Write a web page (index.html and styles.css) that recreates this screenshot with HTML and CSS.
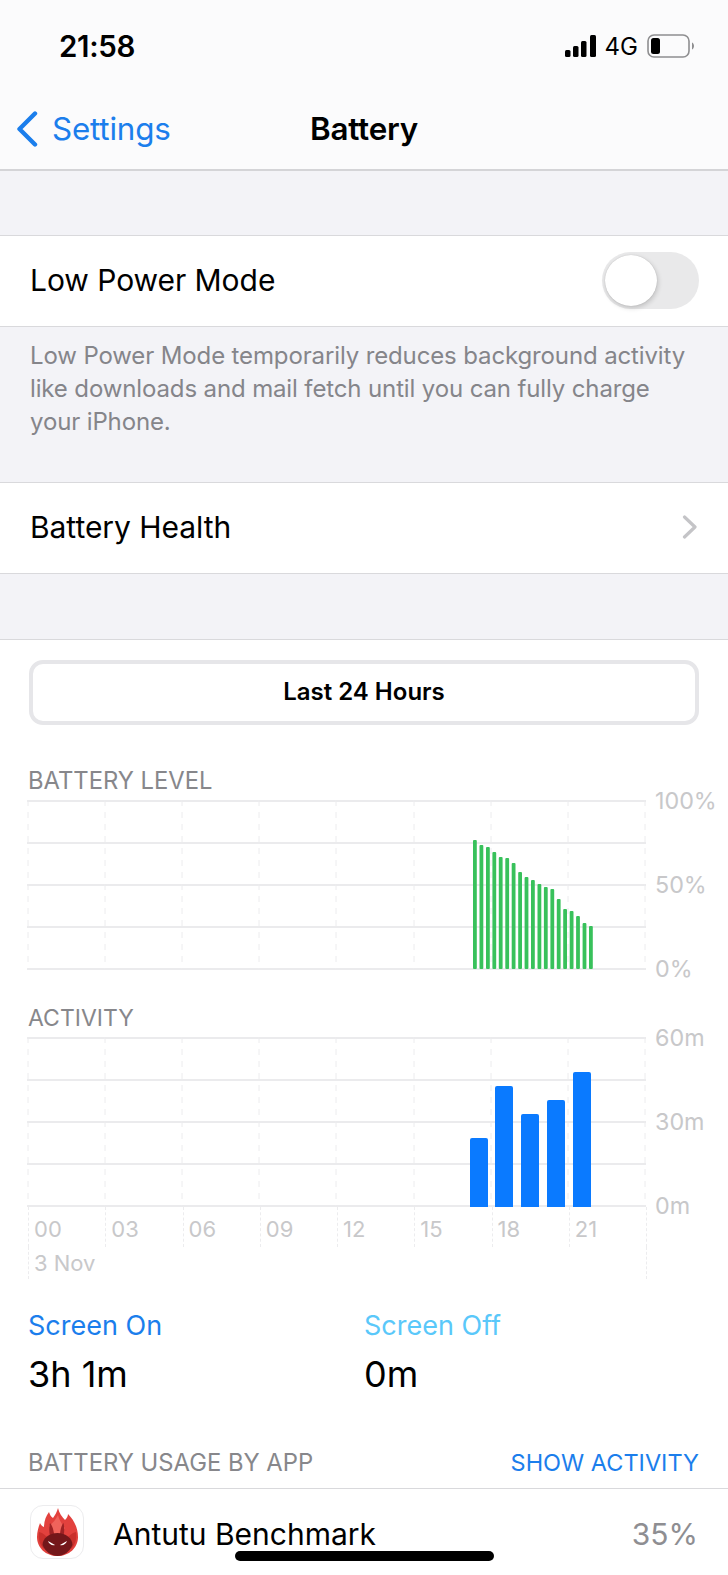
FILE: index.html
```html
<!DOCTYPE html>
<html lang="en">
<head>
<meta charset="utf-8">
<title>Battery</title>
<link rel="stylesheet" href="styles.css">
</head>
<body>
<div class="screen">
  <header class="top">
    <div class="status">
      <span class="time">21:58</span>
      <div class="indicators">
        <svg class="signal" width="32" height="22" viewBox="0 0 32 22"><rect x="0" y="15" width="5.5" height="7" rx="1.5"/><rect x="8" y="11" width="5.5" height="11" rx="1.5"/><rect x="16" y="6" width="5.5" height="16" rx="1.5"/><rect x="25" y="0" width="6" height="22" rx="1.5"/></svg>
        <span class="net">4G</span>
        <svg class="batt" width="47" height="24" viewBox="0 0 47 24"><rect x="1" y="1" width="41" height="22" rx="6" fill="none" stroke="#8e8e90" stroke-width="1.6"/><rect x="4" y="4" width="9" height="16" rx="2.5" fill="#000"/><path d="M45 8.5c1.4.6 2 2 2 3.500s-.6 2.900-2 3.500z" fill="#8e8e90"/></svg>
      </div>
    </div>
    <nav class="nav">
      <a class="back">
        <svg width="22" height="36" viewBox="0 0 22 36"><path d="M19 2.500 3.500 18 19 33.500" fill="none" stroke="#1b7eec" stroke-width="4.400" stroke-linecap="round" stroke-linejoin="round"/></svg>
        <span>Settings</span>
      </a>
      <h1 class="title">Battery</h1>
    </nav>
  </header>

  <section class="cell cell-first">
    <span class="cell-label">Low Power Mode</span>
    <span class="toggle"><span class="knob"></span></span>
  </section>
  <p class="note">Low Power Mode temporarily reduces background activity<br>like downloads and mail fetch until you can fully charge<br>your iPhone.</p>
  <section class="cell">
    <span class="cell-label">Battery Health</span>
    <svg class="chev" width="16" height="24" viewBox="0 0 16 24"><path d="M2.500 2 13 12 2.500 22" fill="none" stroke="#c4c4c7" stroke-width="3.200" stroke-linecap="round" stroke-linejoin="round"/></svg>
  </section>

  <main class="panel">
    <div class="segment">Last 24 Hours</div>

    <h2 class="chart-title first">BATTERY LEVEL</h2>
    <div class="chart">
      <svg class="plot" width="619" height="170" viewBox="0 0 619 170">
        <g class="hlines"><path d="M0 1H619M0 43H619M0 85H619M0 127H619M0 169H619"/></g>
        <g class="vlines"><path d="M1 0V169M78 0V169M155 0V169M232 0V169M309 0V169M387 0V169M464 0V169M541 0V169M618 0V169"/></g>
        <g class="green">
          <rect x="446" y="40" width="3.800" height="129" rx="1"/><rect x="452.500" y="45" width="3.800" height="124" rx="1"/><rect x="459" y="47" width="3.800" height="122" rx="1"/><rect x="465.400" y="52" width="3.800" height="117" rx="1"/><rect x="471.800" y="57" width="3.800" height="112" rx="1"/><rect x="478.300" y="58" width="3.800" height="111" rx="1"/><rect x="484.700" y="63" width="3.800" height="106" rx="1"/><rect x="491.200" y="72" width="3.800" height="97" rx="1"/><rect x="497.600" y="77" width="3.800" height="92" rx="1"/><rect x="504" y="80" width="3.800" height="89" rx="1"/><rect x="510.500" y="84" width="3.800" height="85" rx="1"/><rect x="516.900" y="87" width="3.800" height="82" rx="1"/><rect x="523.400" y="89" width="3.800" height="80" rx="1"/><rect x="529.800" y="99" width="3.800" height="70" rx="1"/><rect x="536.200" y="109" width="3.800" height="60" rx="1"/><rect x="542.700" y="111" width="3.800" height="58" rx="1"/><rect x="549.100" y="116" width="3.800" height="53" rx="1"/><rect x="555.600" y="123" width="3.800" height="46" rx="1"/><rect x="562" y="126" width="3.800" height="43" rx="1"/>
        </g>
      </svg>
      <div class="yaxis"><span>100%</span><span>50%</span><span>0%</span></div>
    </div>

    <h2 class="chart-title second">ACTIVITY</h2>
    <div class="chart">
      <svg class="plot" width="619" height="170" viewBox="0 0 619 170">
        <g class="hlines"><path d="M0 1H619M0 43H619M0 85H619M0 127H619M0 169H619"/></g>
        <g class="vlines"><path d="M1 0V169M78 0V169M155 0V169M232 0V169M309 0V169M387 0V169M464 0V169M541 0V169M618 0V169"/></g>
        <g class="blue">
          <path d="M443 103a2 2 0 0 1 2-2h14a2 2 0 0 1 2 2v67h-18z"/><path d="M468 51a2 2 0 0 1 2-2h14a2 2 0 0 1 2 2v119h-18z"/><path d="M494 79a2 2 0 0 1 2-2h14a2 2 0 0 1 2 2v91h-18z"/><path d="M520 65a2 2 0 0 1 2-2h14a2 2 0 0 1 2 2v105h-18z"/><path d="M546 37a2 2 0 0 1 2-2h14a2 2 0 0 1 2 2v133h-18z"/>
        </g>
      </svg>
      <div class="yaxis"><span>60m</span><span>30m</span><span>0m</span></div>
    </div>
    <div class="xaxis">
      <span>00</span><span>03</span><span>06</span><span>09</span><span>12</span><span>15</span><span>18</span><span>21</span>
    </div>
    <div class="date">3 Nov</div>

    <div class="stats">
      <div class="stat">
        <div class="stat-on">Screen On</div>
        <div class="stat-value">3h 1m</div>
      </div>
      <div class="stat">
        <div class="stat-off">Screen Off</div>
        <div class="stat-value">0m</div>
      </div>
    </div>

    <div class="usage-head">
      <span>BATTERY USAGE BY APP</span>
      <a class="show">SHOW ACTIVITY</a>
    </div>
    <div class="app">
      <span class="app-icon">
        <svg width="54" height="54" viewBox="0 0 54 54">
          <path d="M28 3C29 8 32 12 35 15 37 13 38 11 38 9 44 15 48 23 48 32 48 43 39 51 27.500 51 16 51 7 43 7 32 7 26 9 21 10 18 11 20 12 21 14 22 14 16 16 11 19 7 20 10 21 12 23 13 25 10 27 7 28 3Z" fill="#e2413d"/>
          <path d="M28 10c1 5 4 9 7 13l-7 11-9-13c4-3 7-7 9-11z" fill="#f0635b"/>
          <path d="M9 27c4 1 8 4 10 8l-5 9c-4-4-6-10-5-17zM46 27c-4 1-8 4-10 8l5 9c4-4 6-10 5-17z" fill="#c9302c"/>
          <path d="M20 18c2 2 3.500 6 4 11h6c.5-5 1.500-9 3.500-11 1 4 1 9 0 13H20c-1-4-1-9 0-13z" fill="#9e2224"/>
          <path d="M27.500 28c8 0 15 5 15 12-3 7-9 11-15 11s-12-4-15-11c0-7 7-12 15-12z" fill="#74171a"/>
          <path d="M18 36l7 4c-3 .8-6-1-7-4zM37 36l-7 4c3 .8 6-1 7-4z" fill="#fff"/>
        </svg>
      </span>
      <span class="app-name">Antutu Benchmark</span>
      <span class="app-pct">35%</span>
    </div>
  </main>
  <div class="home"></div>
</div>
</body>
</html>
```

FILE: styles.css
```css
* { box-sizing: border-box; margin: 0; padding: 0; }
html, body { width: 728px; height: 1575px; overflow: hidden; background: #fff; }
body { font-family: Inter, "Liberation Sans", sans-serif; color: #000; }
.screen { position: relative; width: 728px; height: 1575px; background: #f3f3f7; overflow: hidden; }

.top { height: 171px; background: #fbfbfc; border-bottom: 2px solid #d4d4d7; margin-bottom: 64px; }
.status { height: 92px; display: flex; justify-content: space-between; align-items: center; padding: 0 34px 0 59px; }
.time { font-size: 29.500px; font-weight: 600; letter-spacing: -0.3px; }
.indicators { display: flex; align-items: center; }
.signal { fill: #000; margin: 0 8px 0 0; }
.net { font-size: 24px; font-weight: 400; margin-right: 9px; }
.nav { position: relative; height: 77px; display: flex; align-items: center; justify-content: center; }
.back { position: absolute; left: 16px; top: 18px; display: flex; align-items: center; gap: 14px; color: #1b7eec; font-size: 31.400px; letter-spacing: -0.2px; }
.title { font-size: 31.400px; font-weight: 600; letter-spacing: -0.2px; margin-top: -3px; }

.cell { height: 92px; background: #fff; border-top: 1px solid #d9d9dc; border-bottom: 1px solid #d9d9dc; display: flex; align-items: center; justify-content: space-between; padding: 0 30px 2px 30px; }
.cell-label { font-size: 30px; letter-spacing: -0.05px; }
.toggle { width: 97px; height: 57px; border-radius: 29px; background: #e9e9ea; margin-right: -1px; padding: 3px; display: block; }
.knob { display: block; width: 52px; height: 51px; border-radius: 50%; background: #fff; box-shadow: 1px 2px 5px rgba(0,0,0,.18), 0 0 1px rgba(0,0,0,.2); }
.chev { margin-right: 0; }
.note { height: 155px; padding: 12px 30px 0; font-size: 24px; line-height: 33.200px; color: #85858a; letter-spacing: -0.13px; white-space: nowrap; }

.panel { height: 936px; margin-top: 65px; background: #fff; border-top: 1px solid #d9d9dc; padding: 20px 0 0 0; }
.segment { margin: 0 29px; height: 65px; border: 4px solid #e6e6e9; border-radius: 14px; display: flex; align-items: center; justify-content: center; padding-bottom: 2px; font-size: 24px; font-weight: 600; }

.chart-title { margin-left: 28px; height: 30px; line-height: 30px; font-weight: 400; color: #87878b; }
.chart-title.first { font-size: 23.800px; margin-top: 41px; margin-bottom: 4px; }
.chart-title.second { font-size: 23px; margin-top: 33px; margin-bottom: 4px; }
.chart { display: flex; margin-left: 27px; height: 170px; }
.plot { display: block; flex: none; }
.hlines path { stroke: #ebebed; stroke-width: 2; fill: none; }
.vlines path { stroke: #ececee; stroke-width: 1; stroke-dasharray: 6 6; fill: none; }
.green { fill: #38c15b; }
.blue { fill: #0a7aff; }
.yaxis { display: flex; flex-direction: column; justify-content: space-between; height: 196px; margin: -13px 0 0 9px; font-size: 23.300px; line-height: 28px; color: #c8c8ca; }

.xaxis { display: grid; grid-template-columns: repeat(8, 77.250px); margin-left: 28px; width: 619px; border-right: 1px dashed #ececee; height: 40px; }
.xaxis span { border-left: 1px dashed #ececee; padding: 7px 0 0 5px; font-size: 22px; line-height: 30px; color: #c8c8ca; }
.date { margin-left: 28px; width: 619px; height: 32px; border-left: 1px dashed #ececee; border-right: 1px dashed #ececee; padding: 0 0 0 5px; font-size: 22px; line-height: 32px; color: #c8c8ca; }

.stats { display: grid; grid-template-columns: 336px 1fr; padding: 27px 0 0 28px; }
.stat-on, .stat-off { font-size: 27px; line-height: 40px; }
.stat-on { color: #1b7eec; }
.stat-off { color: #5ac8fa; }
.stat-value { font-size: 36px; line-height: 50px; margin-top: 3px; }

.usage-head { display: flex; justify-content: space-between; align-items: baseline; margin-top: 50px; padding: 0 29px 9px 28px; height: 40px; line-height: 28px; color: #87878b; font-size: 23.800px; border-bottom: 1px solid #d9d9dc; }
.show { color: #1b7eec; font-size: 23.500px; }

.app { display: flex; align-items: center; height: 85px; padding: 0 30px 0 30px; }
.app-icon { width: 54px; height: 54px; border-radius: 13px; border: 1px solid #ececee; background: #fff; overflow: hidden; display: block; margin-top: 1px; }
.app-icon svg { display: block; margin: -1px; }
.app-name { font-size: 30px; margin-left: 29px; flex: 1; margin-top: 5px; }
.app-pct { font-size: 30px; color: #8e8e92; margin-top: 5px; }

.home { position: absolute; left: 235px; top: 1551px; width: 259px; height: 10px; border-radius: 5px; background: #000; }
```
